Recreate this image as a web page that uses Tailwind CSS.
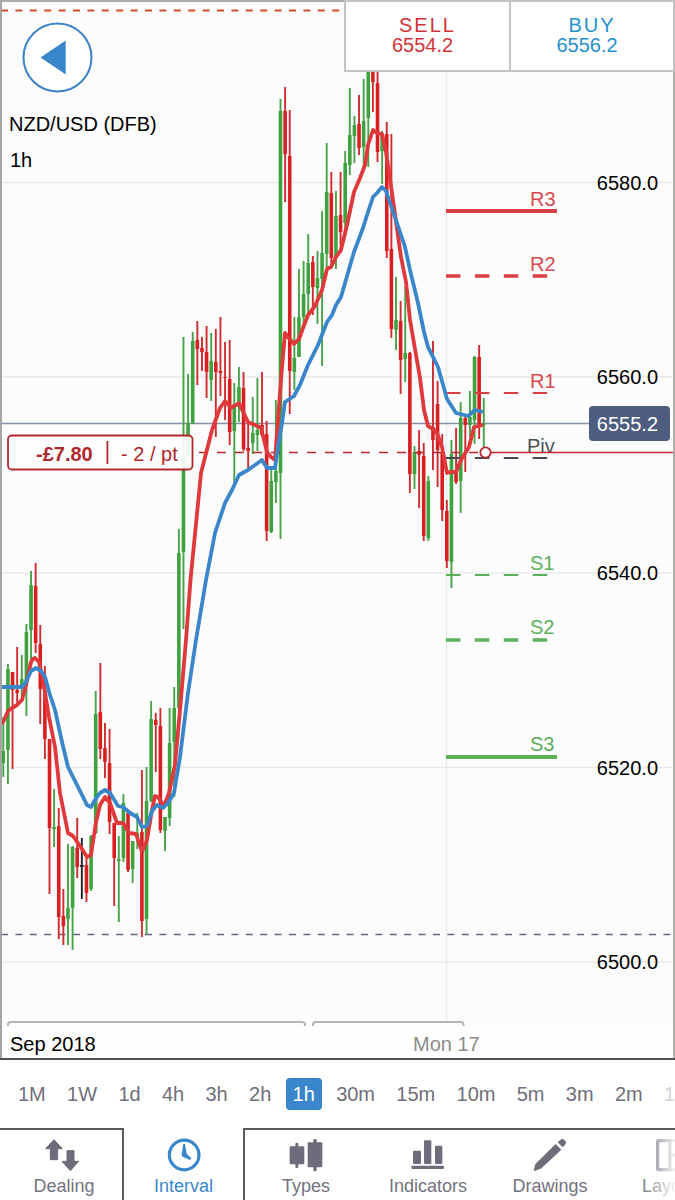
<!DOCTYPE html>
<html lang="en">
<head>
<meta charset="utf-8">
<meta name="viewport" content="width=device-width, initial-scale=1">
<title>NZD/USD (DFB)</title>
<script src="https://cdn.jsdelivr.net/npm/@tailwindcss/browser@4"></script>
</head>
<body class="bg-white font-['Liberation_Sans',Arial,sans-serif] text-xl text-black">
<div class="flex min-h-screen flex-col overflow-hidden">

  <main class="relative border-b-2 border-[#505050] bg-[#fcfcfc]">
    <svg class="block w-full" viewBox="0 0 675 1058" font-size="20" fill="none" role="img" aria-label="NZD/USD one hour candlestick chart">
      <rect x="0" y="1027" width="675" height="31" fill="#fefefe"/>
      <!-- grid -->
      <g stroke="#e9e9eb" stroke-width="1.5">
        <path d="M2 182.5H674M2 377H674M2 573H674M2 767.5H674M2 962H674"/>
        <path d="M446.5 0V1021"/>
      </g>
      <!-- order levels -->
      <path d="M2 10.5H345" stroke="#cf4f2a" stroke-width="2" stroke-dasharray="7 7.4" stroke-dashoffset="1"/>
      <path d="M2 934.5H674" stroke="#6c6286" stroke-width="1.5" stroke-dasharray="7 7.4" stroke-dashoffset="1"/>
      <path d="M2 423.5H590" stroke="#8290a8" stroke-width="1.5"/>
      <g id="candles"></g>
      <!-- pivot levels -->
      <g stroke="#da3f44">
        <path d="M446 211H557" stroke-width="4"/>
        <path d="M446 276H548" stroke-width="3.5" stroke-dasharray="14.5 14.4"/>
        <path d="M446 393H548" stroke-width="2" stroke-dasharray="14.5 14.4"/>
      </g>
      <path d="M446 458H548" stroke="#44474f" stroke-width="2" stroke-dasharray="14.5 14.4"/>
      <g stroke="#5bb05c">
        <path d="M446 575H548" stroke-width="2" stroke-dasharray="14.5 14.4"/>
        <path d="M446 640H548" stroke-width="3.5" stroke-dasharray="14.5 14.4"/>
        <path d="M446 757H557" stroke-width="4"/>
      </g>
      <g fill="#da4a4f">
        <text x="530" y="206">R3</text><text x="530" y="271">R2</text><text x="530" y="388">R1</text>
      </g>
      <text x="527" y="453" fill="#4b4e57">Piv</text>
      <g fill="#5bb05c">
        <text x="530" y="570">S1</text><text x="530" y="634">S2</text><text x="530" y="751">S3</text>
      </g>
      <!-- open position -->
      <path d="M199 452.5H480" stroke="#b8262b" stroke-width="1.7" stroke-dasharray="9 9"/>
      <path d="M490 452.5H674" stroke="#c4262b" stroke-width="1.7"/>
      <!-- moving averages -->
      <g stroke-width="3.8" stroke-linejoin="round">
        <path stroke="#df393c" d="M2 724L5 718L8 711L12 708L17 705L22 700L26 685L31 662L33 659L35 658L39 662L43 680L49 717L55 747L60 793L68 833L73 836L80 846L87 857L91 855L96 822L100 805L105 797L110 803L117 823L123 823L129 833L136 834L142 852L147 840L152 810L155 796L158 797L164 806L169 793L175 765L180 710L186 640L190.5 580L201 473L212 430L220 408L225 401L231 408L239 403L248 422L255 425L261 428L267 452L271 457L275 460L278 420L282 367L285 333L288 337L294 344L299 339L303 328L308 315L315 306L322 290L327 269L331 267L336 257L341 250L347 225L354 192L360 178L365 165L368 145L373 130L377 133L382 134L386 152L392 193L401 257L406 282L410 320L415 349L420 378L424 410L428 426L433 429L437 433L442 447L447 473L451 472L456 472L461 460L469 447L474 427L483 425"/>
        <path stroke="#3a86cb" d="M2 687L12 687L22 687L26 682L31 671L36 668L41 671L45 677L50 695L55 710L62 742L68 767L77 785L87 805L91 807L95 800L100 793L105 790L110 793L118 806L123 807L130 813L137 817L142 827L147 826L152 811L157 805L163 808L168 803L174 793L180 757L188 693L196 640L206 580L215 533L225 503L232 490L239 475L248 470L262 460L267 468L275 468L278 447L282 423L285 402L294 396L300 385L308 365L318 345L327 322L332 315L336 305L341 297L354 252L363 228L368 212L373 197L377 193L382 187L386 191L399 229L405 247L410 270L418 303L424 332L428 347L438 367L447 399L456 413L468 416L475 410L483 412"/>
      </g>
      <circle cx="485.5" cy="452.5" r="5.2" fill="#fff" stroke="#b8262b" stroke-width="1.8"/>
      <rect x="8" y="435.5" width="184.500" height="34" rx="4" fill="#fefefe" fill-opacity="0.92" stroke="#b1272c" stroke-width="1.8"/>
      <g fill="#b1272c">
        <text x="36" y="461" font-weight="700">-£7.80</text>
        <rect x="106.500" y="441" width="1.8" height="23"/>
        <text x="121" y="461">- 2 / pt</text>
      </g>
      <!-- price axis -->
      <g fill="#000" text-anchor="end">
        <text x="658" y="190">6580.0</text><text x="658" y="384">6560.0</text><text x="658" y="580">6540.0</text><text x="658" y="775">6520.0</text><text x="658" y="969">6500.0</text>
      </g>
      <rect x="589" y="406" width="81" height="35" rx="4" fill="#4c5d80"/>
      <text x="658" y="431" fill="#fff" text-anchor="end">6555.2</text>
      <!-- time axis -->
      <path d="M8 1026V1024.500Q8 1022 10.500 1022H302.500Q305 1022 305 1024.500V1026M313 1026V1024.500Q313 1022 315.500 1022H461Q463.500 1022 463.500 1024.500V1026" stroke="#b4b4ba" stroke-width="2"/>
      <text x="10" y="1051" fill="#000">Sep 2018</text>
      <text x="413" y="1051" fill="#8b8b8b">Mon 17</text>
      <!-- instrument -->
      <g fill="#000"><text x="9" y="131">NZD/USD (DFB)</text><text x="10" y="167">1h</text></g>
      <!-- frame -->
      <path d="M1 1058V1" stroke="#a5a5a3" stroke-width="2"/>
      <path d="M0 1H675" stroke="#a9a9a7" stroke-width="2"/>
      <path d="M674 1V1058" stroke="#b0b0aa" stroke-width="2"/>
    </svg>

    <button type="button" aria-label="Back" class="absolute left-[22px] top-[22px] size-[71px]">
      <svg class="size-full" viewBox="0 0 71 71"><circle cx="35.500" cy="35.500" r="34" fill="#fff" stroke="#3a83c8" stroke-width="2"/><path d="M18.500 35.500L43.700 18.500V52.500Z" fill="#3a86cb"/></svg>
    </button>

    <div class="absolute right-0 top-0 flex h-[72px] w-[331px] border-2 border-[#c3c3c2] bg-white leading-5">
      <button type="button" class="flex w-[165px] flex-col items-center justify-center border-r-2 border-[#c3c3c2] pb-0.5 text-[#cf3338]">
        <span class="tracking-widest">SELL</span><span class="pr-2.5">6554.2</span>
      </button>
      <button type="button" class="flex flex-1 flex-col items-center justify-center pb-0.5 text-[#2490cd]">
        <span class="tracking-widest">BUY</span><span class="pr-2.5">6556.2</span>
      </button>
    </div>
  </main>

  <section class="relative flex h-[68px] items-center overflow-hidden text-[#6f6e7b]" aria-label="Interval">
    <div class="flex w-[calc(100%+24px)] shrink-0 justify-between pl-[11px] leading-8">
      <button type="button" class="px-[7px]">1M</button>
      <button type="button" class="px-[7px]">1W</button>
      <button type="button" class="px-[7px]">1d</button>
      <button type="button" class="px-[7px]">4h</button>
      <button type="button" class="px-[7px]">3h</button>
      <button type="button" class="px-[7px]">2h</button>
      <button type="button" class="rounded bg-[#3a86cb] px-[7px] text-white" aria-pressed="true">1h</button>
      <button type="button" class="px-[7px]">30m</button>
      <button type="button" class="px-[7px]">15m</button>
      <button type="button" class="px-[7px]">10m</button>
      <button type="button" class="px-[7px]">5m</button>
      <button type="button" class="px-[7px]">3m</button>
      <button type="button" class="px-[7px]">2m</button>
      <button type="button" class="px-[7px]">1m</button>
    </div>
    <div class="pointer-events-none absolute inset-y-0 right-0 w-9 bg-linear-to-r from-white/0 to-white/80"></div>
  </section>

  <nav class="relative flex h-[72px] overflow-hidden text-lg leading-6 text-[#73727f]">
    <button type="button" class="flex w-[124px] shrink-0 flex-col items-center border-r-2 border-t-2 border-[#5a5a59] pl-[6px] pt-2">
      <svg class="mr-1 h-[34px] w-9" viewBox="132 384 108 102" fill="#6d6c7b" stroke="#6d6c7b" stroke-width="3" stroke-linejoin="round"><path d="M162 389L137 416H151V449H173V416H187ZM211 482L186 454H201V422H222V454H236Z"/></svg>
      <span class="pt-0.5">Dealing</span>
    </button>
    <button type="button" class="flex w-[119px] shrink-0 flex-col items-center pt-2.5 text-[#3a86cb]" aria-pressed="true">
      <svg class="h-[34px] w-9" viewBox="496 384 108 102" fill="#3a86cb"><circle cx="550.500" cy="435" r="44.500" fill="none" stroke="#3a86cb" stroke-width="9.500"/><path d="M548 402H553L558 431L572 445L568 450L546 440Q542 436 543 432Z"/></svg>
      <span class="pt-0.5">Interval</span>
    </button>
    <button type="button" class="flex w-[124px] shrink-0 flex-col items-center border-l-2 border-t-2 border-[#5a5a59] pt-2">
      <svg class="h-[34px] w-9" viewBox="864 384 108 102" fill="#6d6c7b"><rect x="869" y="409" width="44" height="54" rx="3"/><rect x="886" y="398" width="9" height="76" rx="4"/><rect x="923" y="397" width="44" height="75" rx="3"/><rect x="940" y="387" width="10" height="97" rx="4"/></svg>
      <span class="pt-0.5">Types</span>
    </button>
    <button type="button" class="flex w-[122px] shrink-0 flex-col items-center border-t-2 border-[#5a5a59] pt-2">
      <svg class="h-[34px] w-9" viewBox="227 384 108 102" fill="#6d6c7b"><rect x="236" y="422" width="24" height="40" rx="3"/><rect x="269" y="391" width="22" height="71" rx="3"/><rect x="302" y="407" width="22" height="55" rx="3"/><rect x="231" y="467" width="98" height="10" rx="4"/></svg>
      <span class="pt-0.5">Indicators</span>
    </button>
    <button type="button" class="flex w-[122px] shrink-0 flex-col items-center border-t-2 border-[#5a5a59] pt-2">
      <svg class="h-[34px] w-9" viewBox="594 384 108 102" fill="#6d6c7b" stroke="#6d6c7b" stroke-width="2" stroke-linejoin="round"><path d="M600 482L605 462L665 403L681 419L621 475Z"/><path d="M672 397L681 389Q685 386 690 390L694 394Q697 398 694 402L686 411Z"/></svg>
      <span class="pt-0.5">Drawings</span>
    </button>
    <button type="button" class="flex w-[116px] shrink-0 flex-col items-center border-t-2 border-[#5a5a59] pt-2">
      <svg class="ml-2 h-[34px] w-9" viewBox="963 384 108 102" fill="none" stroke="#6d6c7b" stroke-width="10"><rect x="971" y="392" width="90" height="87" rx="2"/><path d="M1008 392V479M1008 435H1061"/></svg>
      <span class="pt-0.5">Layout</span>
    </button>
    <div class="pointer-events-none absolute bottom-0 right-0 top-0.5 w-9 bg-linear-to-r from-white/0 to-white/90"></div>
  </nav>
</div>

<script>
  // kind, high, low, body top, body bottom (chart units), oldest first
  const data = `g 717 777 751 763|g 664 784 669 750|r 672 769 672 690|r 647 705 690 693|g 655 697 679 688|g 624 716 632 683|g 571 662 585 630|r 563 653 586 643|r 625 724 644 689|r 666 759 691 739|r 739 894 739 828|g 789 847 827 829|r 808 939 826 917|r 889 945 916 926|g 844 945 908 919|g 846 950 847 908|r 818 878 848 867|k 838 899 865 867|r 858 902 865 893|g 835 891 836 889|g 691 834 714 833|r 663 759 712 749|r 723 778 748 762|r 729 834 763 822|r 823 906 823 858|g 836 922 859 861|g 794 862 803 858|r 811 872 813 870|g 841 883 841 869|g 813 849 833 837|r 770 937 832 921|g 767 934 801 919|g 701 802 719 801|r 713 772 720 725|r 708 833 726 830|g 817 851 817 831|g 708 826 743 818|g 687 797 708 742|g 529 712 553 708|g 337 629 455 552|g 374 456 423 456|g 332 424 341 423|r 321 385 340 349|r 337 371 348 352|r 326 398 352 372|g 333 401 361 380|r 329 437 362 372|r 317 396 371 373|r 342 420 377 378|r 340 445 379 432|g 383 483 404 431|g 367 422 387 407|r 372 451 388 449|r 423 468 448 451|g 397 454 433 443|g 378 451 430 435|r 372 436 425 435|r 421 541 434 531|g 470 533 481 532|g 400 503 471 482|g 99 539 111 473|r 87 202 111 154|r 110 414 156 371|g 317 390 358 372|g 269 357 317 357|g 261 327 294 317|g 234 313 263 294|r 256 315 262 287|g 251 324 278 288|g 211 366 253 279|g 143 268 192 254|r 172 267 193 258|g 191 269 216 258|r 172 253 215 232|g 151 230 163 223|g 88 175 135 165|g 116 163 125 136|r 95 155 124 148|g 79 170 121 147|g 60 167 60 118|r 60 112 60 82|r 60 162 83 152|g 131 184 133 151|r 122 258 134 251|r 134 338 249 329|g 277 350 320 330|r 301 394 321 360|g 287 382 353 359|r 352 493 353 474|g 446 489 452 474|r 430 508 451 455|r 443 541 456 536|g 476 541 481 538|r 341 470 427 440|r 381 487 404 450|r 434 521 452 510|r 500 568 511 561|g 440 588 454 562|r 428 484 472 482|g 402 513 418 481|r 417 472 418 425|g 391 437 417 425|g 356 444 357 420|r 345 439 357 425|g 398 452 424 425`;
  const body = { g: '#3ea23f', r: '#d81f22', k: '#22222c' };
  const wick = { g: '#47a249', r: '#d02c30', k: '#22222c' };
  const layer = document.getElementById('candles');
  const line = (x, y1, y2, w, color) => {
    const el = document.createElementNS('http://www.w3.org/2000/svg', 'path');
    el.setAttribute('d', `M${x} ${y1}V${y2}`);
    el.setAttribute('stroke', color);
    el.setAttribute('stroke-width', w);
    layer.appendChild(el);
  };
  data.split('|').forEach((row, i) => {
    const [kind, high, low, top, bottom] = row.split(' ');
    const x = (3.3 + i * 4.62).toFixed(2);
    line(x, high, low, 1.9, wick[kind]);
    line(x, top, bottom, 3.6, body[kind]);
  });
</script>
</body>
</html>
